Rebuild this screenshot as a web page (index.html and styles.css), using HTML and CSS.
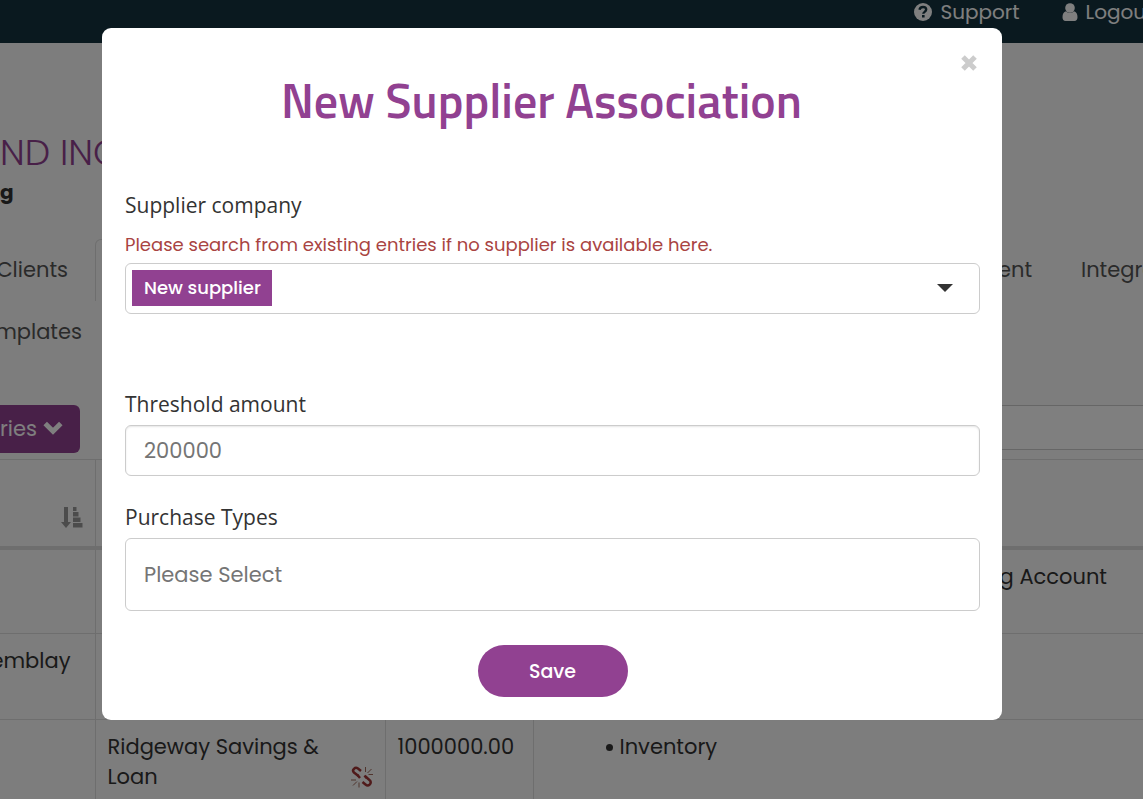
FILE: index.html
```html
<!DOCTYPE html>
<html lang="en">
<head>
    <meta charset="UTF-8">
    <meta name="viewport" content="width=device-width, initial-scale=1.0">
    <title>New Supplier Association</title>
    <link rel="stylesheet" href="styles.css">
</head>
<body>
    <div class="page">
        <header class="topbar">
            <a class="top-link" href="#">
                <svg class="icon" width="18" height="18" viewBox="0 0 18 18"><circle cx="9" cy="9" r="9" fill="#fff"/><path d="M5.500 6.800C5.800 4.800 7.200 4 9 4c1.900 0 3.200 1 3.200 2.600 0 2.300-2.900 2.200-2.900 4.200" fill="none" stroke="#14333f" stroke-width="2.400"/><rect x="8" y="12" width="2.600" height="2.500" fill="#14333f"/></svg>
                Support
            </a>
            <a class="top-link" href="#">
                <svg class="icon" width="16" height="18" viewBox="0 0 16 18"><circle cx="8" cy="5" r="4.800" fill="#fff"/><path d="M4 8.300c2 2 6 2 8 0 2.300.5 3.500 2.700 3.500 6 0 2.200-1.200 3.700-3 3.700h-9c-1.800 0-3-1.500-3-3.700 0-3.300 1.200-5.500 3.500-6z" fill="#fff"/></svg>
                Logout
            </a>
        </header>

        <div class="company">
            <h2 class="company-name">ND INC</h2>
            <strong class="company-sub">g</strong>
        </div>

        <nav class="tabs">
            <a class="tab tab-first" href="#">Clients</a>
            <span class="tab tab-active"></span>
            <a class="tab tab-cut" href="#">ent</a>
            <a class="tab" href="#">Integrations</a>
        </nav>
        <nav class="tabs tabs-second">
            <a class="tab tab-templates" href="#">mplates</a>
        </nav>

        <div class="toolbar">
            <button class="entries-button" type="button">ries
                <svg class="icon" width="20" height="14" viewBox="0 0 20 14"><path d="M2.200 2.500L10 10.200l7.800-7.700" fill="none" stroke="#fff" stroke-width="5"/></svg>
            </button>
            <input class="search" type="text" aria-label="Search">
        </div>

        <table class="suppliers">
            <thead>
                <tr>
                    <th class="col-name">
                        <svg width="22" height="22" viewBox="0 0 22 22" fill="#999"><path d="M3 0h4v15h3l-5 6-5-6h3zM12 0h3.500v4h-3.500zM12 5h5.500v4.500h-5.500zM12 10.500h7.500v4.500h-7.500zM12 16h9.500v4.500h-9.500z"/></svg>
                    </th>
                    <th class="col-supplier"></th>
                    <th class="col-amount"></th>
                    <th></th>
                </tr>
            </thead>
            <tbody>
                <tr>
                    <td></td>
                    <td></td>
                    <td></td>
                    <td class="cell-right">g Account</td>
                </tr>
                <tr>
                    <td class="cell-person">emblay</td>
                    <td></td>
                    <td></td>
                    <td></td>
                </tr>
                <tr>
                    <td></td>
                    <td>
                        <div class="supplier">
                            <span>Ridgeway Savings &amp; Loan</span>
                            <svg class="unlink" width="22" height="22" viewBox="0 0 22 22" fill="none"><path d="M7.500 10L3 6.500C0.500 4 4 0.500 7 2.500L10 5M11.500 16l3 2.500c3 2.500 6.500-1 4.500-4L14.500 10.500" stroke="#a03535" stroke-width="2.500"/><path d="M6.500 9L9 12M13.500 9.500L15.500 12" stroke="#a03535" stroke-width="2.500"/><path d="M14.500 1v5M16.500 7l4-4M17.500 8.500h4.500M0 14h5M2 19.500l4-4M8 16.500v5" stroke="#a06a5c"/></svg>
                        </div>
                    </td>
                    <td>1000000.00</td>
                    <td>
                        <ul class="types"><li>Inventory</li></ul>
                    </td>
                </tr>
            </tbody>
        </table>
    </div>

    <div class="overlay">
        <form class="modal" role="dialog" aria-labelledby="modalTitle">
            <button class="close" type="button" aria-label="Close">
                <svg width="16" height="16" viewBox="0 0 16 16"><path d="M2 2l12 12M14 2L2 14" stroke="#ccc" stroke-width="5"/></svg>
            </button>
            <h1 class="modal-title" id="modalTitle">New Supplier Association</h1>

            <div class="field field-supplier">
                <label class="label" for="supplier">Supplier company</label>
                <p class="hint">Please search from existing entries if no supplier is available here.</p>
                <button class="picker" id="supplier" type="button">
                    <span class="tag">New supplier</span>
                    <svg width="16" height="8" viewBox="0 0 16 8"><path d="M0 0h16L8 8z" fill="#333"/></svg>
                </button>
            </div>

            <div class="field">
                <label class="label" for="threshold">Threshold amount</label>
                <input class="input" id="threshold" type="text" placeholder="200000">
            </div>

            <div class="field">
                <label class="label" for="types">Purchase Types</label>
                <input class="input input-tall" id="types" type="text" placeholder="Please Select">
            </div>

            <button class="save" type="submit">Save</button>
        </form>
    </div>
</body>
</html>
```

FILE: styles.css
```css
* {
    box-sizing: border-box;
    margin: 0;
    padding: 0;
}

body {
    font-family: Poppins, Inter, "Open Sans", sans-serif;
    font-size: 21px;
    line-height: 30px;
    color: #333;
    background-color: #fafafa;
    height: 100vh;
    overflow: hidden;
}

a {
    color: inherit;
    text-decoration: none;
}

button,
input {
    font-family: inherit;
    font-size: 21px;
}

.icon {
    flex: none;
}

.topbar {
    display: flex;
    gap: 42px;
    height: 43px;
    padding: 0 0 20px 80%;
    align-items: center;
    background-color: #14333f;
    color: #fff;
    font-size: 20px;
    overflow: hidden;
}

.top-link {
    display: flex;
    flex: none;
    align-items: center;
    gap: 8px;
    line-height: 24px;
}

.company {
    padding-top: 85px;
}

.company-name {
    font-size: 36px;
    font-weight: 300;
    line-height: 50px;
    color: #914191;
}

.company-sub {
    display: block;
    font-size: 20px;
    line-height: 28px;
}

.tabs {
    display: flex;
    height: 62px;
    margin-top: 33px;
    color: #555;
    overflow: hidden;
}

.tab {
    flex: none;
    line-height: 62px;
}

/* the start of these labels runs off the left edge */
.tab-first,
.tab-templates,
.suppliers .cell-person {
    direction: rtl;
    white-space: nowrap;
}

.tab-first {
    width: 95px;
    padding-right: 27px;
}

.tab-active {
    width: 903px;
    border: 1px solid #ddd;
    border-bottom: none;
    border-radius: 6px 6px 0 0;
}

.tab-cut {
    width: 83px;
}

.tabs-second {
    margin-top: 0;
}

.tab-templates {
    width: 82px;
}

.toolbar {
    display: flex;
    gap: 24px;
    height: 54px;
    margin-top: 42px;
}

.entries-button {
    display: flex;
    align-items: center;
    justify-content: flex-end;
    gap: 6px;
    width: 80px;
    height: 48px;
    padding: 0 17px 2px 0;
    background-color: #914191;
    color: #fff;
    border: none;
    border-radius: 0 6px 6px 0;
}

.search {
    flex: 1;
    height: 45px;
    background-color: #fff;
    border: 1px solid #ccc;
    border-right: none;
}

.suppliers {
    width: 100%;
    table-layout: fixed;
    border-collapse: collapse;
    border-top: 1px solid #ddd;
}

.suppliers th {
    height: 88px;
    padding: 30px 12px 0 0;
    text-align: right;
    line-height: 0;
    border-right: 1px solid #ddd;
    border-bottom: 4px solid #ddd;
}

.suppliers td {
    height: 86px;
    padding: 12px;
    vertical-align: top;
    border-right: 1px solid #ddd;
    border-bottom: 1px solid #ddd;
}

.suppliers th:last-child,
.suppliers td:last-child {
    border-right: none;
}

.col-name {
    width: 95px;
}

.col-supplier {
    width: 290px;
}

.col-amount {
    width: 148px;
}

.suppliers .cell-right {
    padding-right: 36px;
    text-align: right;
}

.suppliers .cell-person {
    padding-left: 0;
    padding-right: 24px;
}

.supplier {
    display: flex;
    align-items: flex-end;
    justify-content: space-between;
}

.unlink {
    flex: none;
    margin-bottom: 4px;
}

.types {
    padding-left: 60px;
    list-style: none;
}

.types li {
    display: flex;
    align-items: center;
    gap: 7px;
}

.types li::before {
    content: "";
    width: 7px;
    height: 7px;
    background-color: #333;
    border-radius: 50%;
}

.overlay {
    position: fixed;
    inset: 0;
    padding: 28px 39px 0 0;
    background-color: rgba(0, 0, 0, 0.5);
}

.modal {
    position: relative;
    width: 900px;
    max-width: 100%;
    margin: 0 auto;
    padding: 43px 22px 23px 23px;
    background-color: #fff;
    border-radius: 9px;
}

.close {
    position: absolute;
    top: 27px;
    right: 25px;
    width: 16px;
    height: 16px;
    border: none;
    background: none;
    line-height: 0;
    cursor: pointer;
}

.modal-title {
    margin-bottom: 59px;
    padding-right: 22px;
    font-family: "Titillium Web", Roboto, sans-serif;
    font-size: 48px;
    font-weight: 600;
    line-height: 60px;
    color: #914191;
    text-align: center;
}

.field {
    margin-bottom: 26px;
}

.field-supplier {
    margin-bottom: 75px;
}

.label {
    display: block;
    margin-bottom: 6px;
    font-family: "Open Sans", sans-serif;
    font-size: 21px;
    line-height: 30px;
}

.hint {
    margin: 10px 0 3px;
    font-size: 18px;
    line-height: 30px;
    color: #a94442;
}

.picker {
    display: flex;
    align-items: center;
    justify-content: space-between;
    width: 100%;
    height: 51px;
    padding: 0 26px 2px 6px;
    background-color: #fff;
    border: 1px solid #ccc;
    border-radius: 6px;
    cursor: pointer;
}

.tag {
    padding: 0 11px 0 12px;
    background-color: #914191;
    color: #fff;
    font-size: 18px;
    font-weight: 500;
    line-height: 36px;
}

.input {
    display: block;
    width: 100%;
    height: 51px;
    padding: 0 18px;
    background-color: #fff;
    border: 1px solid #ccc;
    border-radius: 6px;
    box-shadow: inset 0 1px 2px rgba(0, 0, 0, 0.1);
}

.input::placeholder {
    color: #757575;
}

.input-tall {
    height: 73px;
    box-shadow: none;
}

.save {
    display: block;
    width: 150px;
    height: 52px;
    margin: 34px auto 0;
    background-color: #914191;
    color: #fff;
    font-size: 19px;
    font-weight: 500;
    border: none;
    border-radius: 26px;
    cursor: pointer;
}
```
